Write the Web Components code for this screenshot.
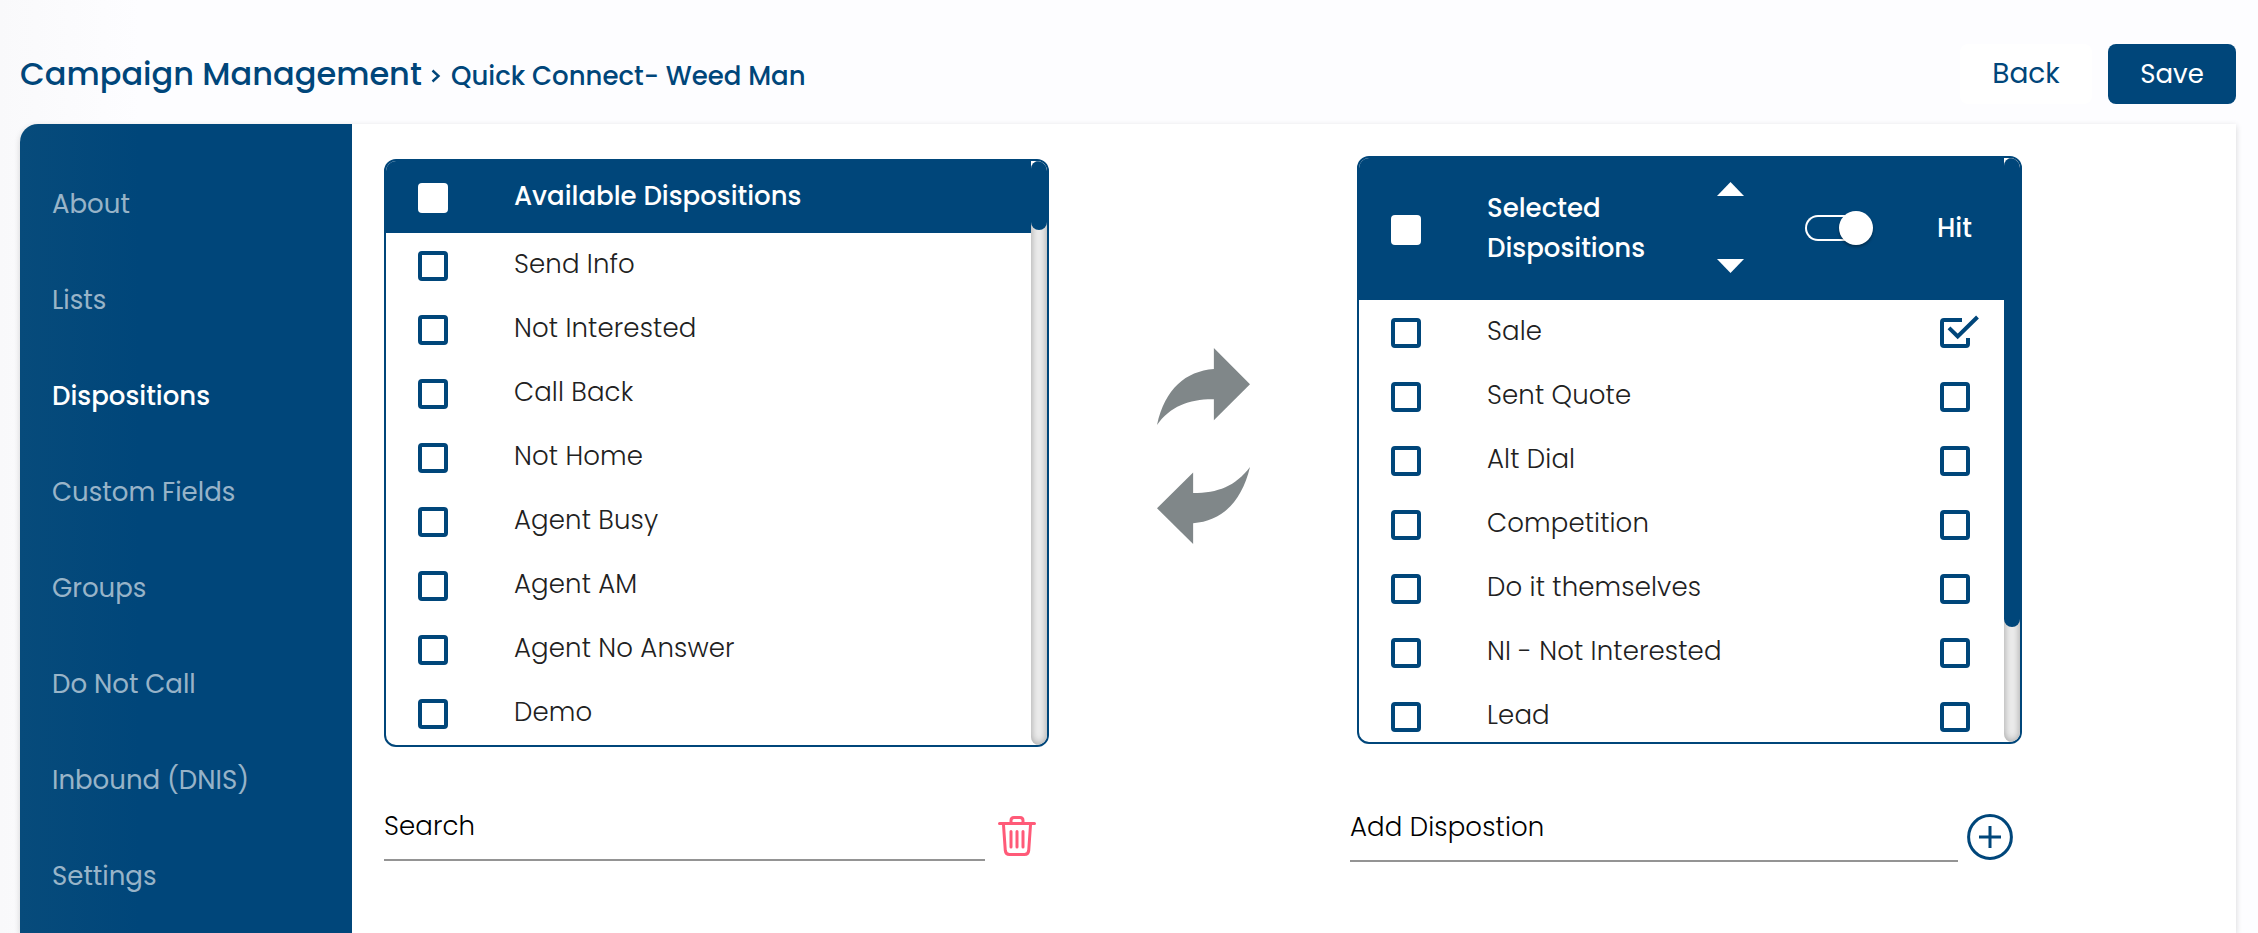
<!DOCTYPE html>
<html lang="en">
<head>
  <meta charset="UTF-8">
  <title>Campaign Management</title>
  <style>
    body {
      --blue: #00467a;
      margin: 0;
      height: 933px;
      overflow: hidden;
      background: linear-gradient(90deg, #f9f9fb, #fdfdff 140px);
      font: 400 26px/40px Poppins, Inter, "Open Sans", sans-serif;
      color: #212121;
    }
  </style>
</head>
<body>
  <campaign-page>
    <page-header slot="header" heading="Campaign Management" campaign="Quick Connect- Weed Man">
      <app-button>Back</app-button>
      <app-button primary>Save</app-button>
    </page-header>
    <side-nav slot="nav">
      <nav-item>About</nav-item>
      <nav-item>Lists</nav-item>
      <nav-item active>Dispositions</nav-item>
      <nav-item>Custom Fields</nav-item>
      <nav-item>Groups</nav-item>
      <nav-item>Do Not Call</nav-item>
      <nav-item>Inbound (DNIS)</nav-item>
      <nav-item>Settings</nav-item>
    </side-nav>

    <list-panel style="--head: 72px; --thumb: 69px; --top: 35px">
      <panel-head slot="head">Available Dispositions</panel-head>
      <list-row>Send Info</list-row>
      <list-row>Not Interested</list-row>
      <list-row>Call Back</list-row>
      <list-row>Not Home</list-row>
      <list-row>Agent Busy</list-row>
      <list-row>Agent AM</list-row>
      <list-row>Agent No Answer</list-row>
      <list-row>Demo</list-row>
    </list-panel>

    <transfer-arrows></transfer-arrows>

    <list-panel style="--head: 142px; --thumb: 469px; --top: 32px">
      <panel-head slot="head" sortable>Selected<br>Dispositions</panel-head>
      <list-row hit="on">Sale</list-row>
      <list-row hit>Sent Quote</list-row>
      <list-row hit>Alt Dial</list-row>
      <list-row hit>Competition</list-row>
      <list-row hit>Do it themselves</list-row>
      <list-row hit>NI - Not Interested</list-row>
      <list-row hit>Lead</list-row>
    </list-panel>

    <line-field label="Search" style="--w: 601px; --gap: 13px; margin-top: 59px">
      <svg width="38" height="40" viewBox="0 0 38 40" fill="none" stroke="#ff5a78" stroke-linecap="round">
        <path d="M1.5 7.5H36.5" stroke-width="3"/>
        <path d="M13 7V4.5Q13 1.5 16 1.5H22Q25 1.5 25 4.5V7M5.5 9L7.3 34.5Q7.7 38.5 11.5 38.5H26.5Q30.3 38.5 30.7 34.5L32.5 9" stroke-width="3"/>
        <path d="M13 15.5V31M19 15.5V31M25 15.5V31" stroke-width="3"/>
      </svg>
    </line-field>
    <line-field label="Add Dispostion" style="--w: 608px; --gap: 9px; grid-column: 3; margin: 60px 0 0 -7px">
      <svg width="46" height="46" viewBox="0 0 46 46" fill="none" stroke="#00467a">
        <circle cx="23" cy="23" r="21.4" stroke-width="3"/>
        <path d="M12 23H34M23 12V34" stroke-width="3"/>
      </svg>
    </line-field>
  </campaign-page>

  <script type="module">
    class BaseElement extends HTMLElement {
      constructor() {
        super();
        const template = document.createElement('template');
        template.innerHTML = this.render();
        this.attachShadow({mode: 'open'});
        this.shadowRoot.appendChild(template.content.cloneNode(true));
      }
    }

    customElements.define('campaign-page', class extends BaseElement {
      render() {
        return `
          <style>
            :host { display: block; padding: 0 22px 0 20px; }
            .card {
              display: flex;
              height: 809px;
              border-radius: 18px 0 0 0;
              background: #fff;
              box-shadow: 0 2px 6px rgba(0, 0, 0, 0.16);
            }
            main {
              display: grid;
              grid-template-columns: 665px 308px 665px;
              grid-template-rows: 623px auto;
              align-content: start;
              padding-left: 32px;
            }
          </style>
          <slot name="header"></slot>
          <div class="card">
            <slot name="nav"></slot>
            <main><slot></slot></main>
          </div>
        `;
      }
    });

    customElements.define('page-header', class extends BaseElement {
      render() {
        return `
          <style>
            :host {
              display: flex;
              justify-content: space-between;
              box-sizing: border-box;
              height: 124px;
              padding-top: 44px;
              color: var(--blue);
              font-weight: 500;
            }
            .crumbs { display: flex; align-items: baseline; padding-top: 8px; white-space: nowrap; }
            h1 { width: 411px; margin: 0; font-size: 32px; line-height: 44px; font-weight: 500; }
            svg { width: 20px; height: 18px; }
            .buttons { display: flex; gap: 16px; }
          </style>
          <div class="crumbs">
            <h1>${this.getAttribute('heading')}</h1>
            <svg viewBox="0 0 20 18" fill="none" stroke="#00467a" stroke-width="2.4"><path d="M1.5 3.5L7.5 9L1.5 14.5"/></svg>
            <span>${this.getAttribute('campaign')}</span>
          </div>
          <div class="buttons"><slot></slot></div>
        `;
      }
    });

    customElements.define('app-button', class extends BaseElement {
      render() {
        return `
          <style>
            :host {
              display: flex;
              align-items: center;
              justify-content: center;
              box-sizing: border-box;
              width: 132px;
              height: 60px;
              border-radius: 8px;
              background: #fff;
              font-size: 28px;
              font-weight: 400;
            }
            :host([primary]) { width: 128px; background: var(--blue); color: #fff; font-size: 26px; }
          </style>
          <slot></slot>
        `;
      }
    });

    customElements.define('side-nav', class extends BaseElement {
      render() {
        return `
          <style>
            :host {
              display: flex;
              flex-direction: column;
              box-sizing: border-box;
              width: 332px;
              padding: 32px 0 0 32px;
              border-radius: 18px 0 0 0;
              background: linear-gradient(90deg, #074b7b, var(--blue) 120px);
            }
          </style>
          <slot></slot>
        `;
      }
    });

    customElements.define('nav-item', class extends BaseElement {
      render() {
        return `
          <style>
            :host { display: block; line-height: 96px; color: rgba(255, 255, 255, 0.6); }
            :host([active]) { color: #fff; font-weight: 500; }
          </style>
          <slot></slot>
        `;
      }
    });

    customElements.define('list-panel', class extends BaseElement {
      render() {
        return `
          <style>
            :host {
              display: flex;
              box-sizing: border-box;
              height: 588px;
              margin-top: var(--top);
              border: 2px solid var(--blue);
              border-radius: 12px;
              overflow: hidden;
            }
            .list { flex: 1; overflow: hidden; }
            .head { height: var(--head); background: var(--blue); }
            .track {
              width: 16px;
              border-radius: 10px;
              background: #efefef;
              box-shadow: inset 0 0 8px #999;
            }
            .thumb { height: var(--thumb); border-radius: 10px; background: var(--blue); }
          </style>
          <div class="list">
            <div class="head"><slot name="head"></slot></div>
            <slot></slot>
          </div>
          <div class="track"><div class="thumb"></div></div>
        `;
      }
    });

    customElements.define('panel-head', class extends BaseElement {
      render() {
        const tools = this.hasAttribute('sortable') ? `
          <div class="sort">
            <svg width="27" height="14"><path d="M0 14L13.5 0L27 14z" fill="#fff"/></svg>
            <svg width="27" height="14"><path d="M0 0L13.5 14L27 0z" fill="#fff"/></svg>
          </div>
          <div class="toggle"><i></i></div>
          <span class="hit">Hit</span>` : '';
        return `
          <style>
            :host {
              display: flex;
              align-items: center;
              height: 100%;
              padding-left: 32px;
              color: #fff;
              font-weight: 500;
            }
            .box { width: 30px; height: 30px; margin: 2px 66px 0 0; border-radius: 4px; background: #fff; }
            .title { width: 230px; padding-bottom: 2px; white-space: nowrap; }
            .sort { display: flex; flex-direction: column; gap: 63px; padding-bottom: 3px; }
            .toggle {
              display: flex;
              align-items: center;
              justify-content: flex-end;
              box-sizing: border-box;
              width: 68px;
              height: 26px;
              margin: 0 64px 2px 61px;
              background:
                linear-gradient(#fff, #fff) 13px 0 / 40px 2px no-repeat,
                linear-gradient(#fff, #fff) 13px 100% / 40px 2px no-repeat;
            }
            .toggle::before {
              content: "";
              box-sizing: border-box;
              width: 13px;
              height: 26px;
              margin-right: auto;
              border: 2px solid #fff;
              border-right: 0;
              border-radius: 13px 0 0 13px;
            }
            .toggle i { width: 34px; height: 34px; border-radius: 50%; background: #fff; box-shadow: 0 2px 3px rgba(0, 0, 0, 0.35); }
            .hit { padding-bottom: 2px; }
          </style>
          <div class="box"></div>
          <div class="title"><slot></slot></div>
          ${tools}
        `;
      }
    });

    customElements.define('list-row', class extends BaseElement {
      render() {
        const box = '<check-box></check-box>';
        const checked = '<check-box checked></check-box>';
        const hit = this.hasAttribute('hit') ? (this.getAttribute('hit') === 'on' ? checked : box) : '';
        return `
          <style>
            :host {
              display: flex;
              align-items: center;
              height: 64px;
              padding: 0 34px 0 32px;
              font-weight: 300;
              letter-spacing: 0.13px;
            }
            check-box { margin-top: 2px; }
            .text { flex: 1; padding: 0 0 2px 66px; }
          </style>
          ${box}
          <div class="text"><slot></slot></div>
          ${hit}
        `;
      }
    });

    customElements.define('check-box', class extends BaseElement {
      render() {
        const path = this.hasAttribute('checked')
          ? '<path d="M22 2H4Q2 2 2 4V26Q2 28 4 28H26Q28 28 28 26V20"/><path d="M9 9.8L17.7 18.5L37.5 -1"/>'
          : '<rect x="2" y="2" width="26" height="26" rx="2"/>';
        return `
          <style>
            :host { display: block; width: 30px; height: 30px; }
            svg { display: block; overflow: visible; }
          </style>
          <svg width="30" height="30" fill="none" stroke="#00467a" stroke-width="4">${path}</svg>
        `;
      }
    });

    customElements.define('transfer-arrows', class extends BaseElement {
      render() {
        return `
          <style>
            :host { display: flex; flex-direction: column; align-items: center; gap: 42px; padding-top: 224px; }
            svg { fill: #808789; }
          </style>
          <svg width="93" height="77" viewBox="80 54 278 230"><path d="M358 162L250 54V117C165 124 105 175 80 284C120 227 178 206 250 207V270z"/></svg>
          <svg width="93" height="77" viewBox="80 411 278 230"><path d="M80 534L188 427V489C262 489 315 468 358 411C333 515 275 572 188 579V641z"/></svg>
        `;
      }
    });

    customElements.define('line-field', class extends BaseElement {
      render() {
        return `
          <style>
            :host { display: flex; align-items: center; gap: var(--gap); height: 55px; color: #000; font-weight: 300; letter-spacing: 0.13px; }
            .field { box-sizing: border-box; width: var(--w); height: 55px; border-bottom: 2px solid #949494; }
            ::slotted(svg) { margin-top: 5px; }
          </style>
          <div class="field">${this.getAttribute('label')}</div>
          <slot></slot>
        `;
      }
    });
  </script>
</body>
</html>
